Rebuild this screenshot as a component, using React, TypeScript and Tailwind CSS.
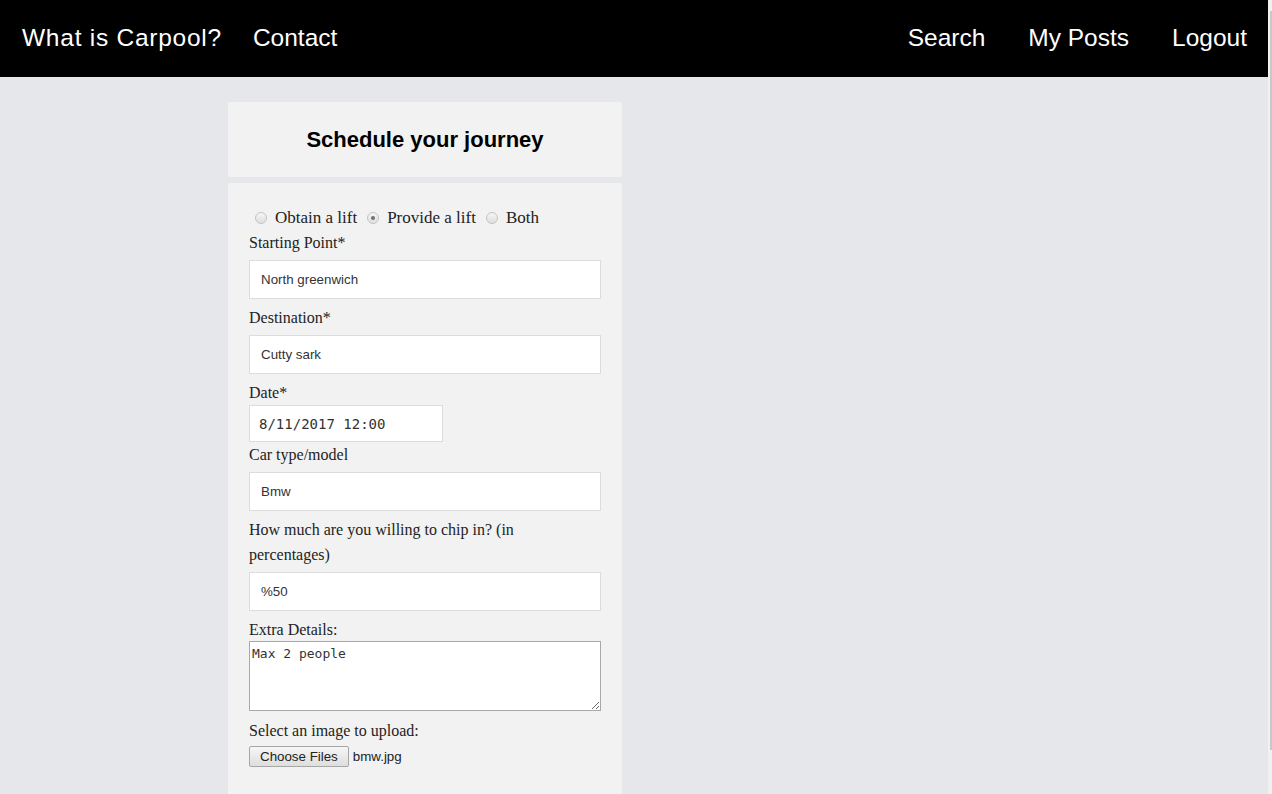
import { useState } from "react"

function Radio({ checked, label, onClick }: { checked: boolean; label: string; onClick: () => void }) {
  return (
    <label className="flex items-center cursor-pointer" onClick={onClick}>
      <span className="w-[12px] h-[12px] rounded-full border border-[#c4c4c4] bg-gradient-to-b from-[#f6f6f6] to-[#dedede] flex items-center justify-center mr-[8px]">
        {checked && <span className="w-[4px] h-[4px] rounded-full bg-[#707070]" />}
      </span>
      <span>{label}</span>
    </label>
  )
}

function Field({ label, value }: { label: React.ReactNode; value: string }) {
  return (
    <>
      <div>{label}</div>
      <input
        type="text"
        defaultValue={value}
        className="block w-[352px] h-[39px] mt-[5px] mb-[6px] px-[11px] bg-white border border-[#dcdcdc] text-[13.33px] text-[#333] font-['Liberation_Sans',Arial,sans-serif] outline-none"
      />
    </>
  )
}

export default function App() {
  const [mode, setMode] = useState("provide")

  return (
    <div className="min-h-[794px] flex bg-[#e6e7eb]">
      <div className="flex-1 flex flex-col">
        {/* Nav */}
        <nav className="h-[77px] bg-black flex items-center justify-between text-white text-[24.5px] font-['Liberation_Sans',Arial,sans-serif]">
          <div className="flex pl-[22px]">
            <a href="#" className="leading-none tracking-[0.75px]">What is Carpool?</a>
            <a href="#" className="leading-none ml-[31px]">Contact</a>
          </div>
          <div className="flex gap-[43px] pr-[21px]">
            <a href="#" className="leading-none">Search</a>
            <a href="#" className="leading-none">My Posts</a>
            <a href="#" className="leading-none">Logout</a>
          </div>
        </nav>

        {/* Form column */}
        <div className="flex-1 pl-[228px] pt-[25px] flex flex-col gap-[6px] w-[622px]">
          <div className="h-[75px] bg-[#f2f2f2] rounded-[2px] flex items-center justify-center">
            <h2 className="text-[22px] font-bold text-black font-['Liberation_Sans',Arial,sans-serif]">Schedule your journey</h2>
          </div>

          <div className="flex-1 bg-[#f2f2f2] rounded-t-[2px] pt-[22px] pb-[20px] pl-[21px] text-[16px] leading-[25px] text-[#222] font-['Liberation_Serif','Times_New_Roman',serif]">
            <div className="flex items-center gap-[10px] pl-[6px] text-[17px]">
              <Radio checked={mode === "obtain"} label="Obtain a lift" onClick={() => setMode("obtain")} />
              <Radio checked={mode === "provide"} label="Provide a lift" onClick={() => setMode("provide")} />
              <Radio checked={mode === "both"} label="Both" onClick={() => setMode("both")} />
            </div>

            <Field label="Starting Point*" value="North greenwich" />
            <Field label="Destination*" value="Cutty sark" />

            <div>Date*</div>
            <input
              type="text"
              defaultValue="8/11/2017 12:00"
              className="block w-[194px] h-[37px] px-[9px] bg-white border border-[#dcdcdc] text-[14px] text-[#333] font-['DejaVu_Sans_Mono','Liberation_Mono',monospace] outline-none"
            />

            <Field label="Car type/model" value="Bmw" />
            <Field
              label={
                <>
                  How much are you willing to chip in? (in
                  <br />
                  percentages)
                </>
              }
              value="%50"
            />

            <div>Extra Details:</div>
            <textarea
              defaultValue="Max 2 people"
              className="block w-[352px] h-[70px] -mt-[1px] mb-[7px] px-[2px] py-[4px] bg-white border border-[#a9a9a9] text-[13px] leading-[16px] text-[#333] font-['DejaVu_Sans_Mono','Liberation_Mono',monospace] outline-none"
            />

            <div>Select an image to upload:</div>
            <div className="flex items-center mt-[1px] font-['Liberation_Sans',Arial,sans-serif] text-[13.33px] text-[#222]">
              <button className="h-[21px] px-[10px] border border-[#a6a6a6] rounded-[2px] bg-gradient-to-b from-[#f6f6f6] to-[#dedede] leading-none text-[#222]">
                Choose Files
              </button>
              <span className="ml-[4px]">bmw.jpg</span>
            </div>
          </div>
        </div>
      </div>

      {/* scrollbar strip */}
      <div className="w-[4px] bg-[#f1f1f1] pt-[11px] pb-[44px] flex justify-end">
        <div className="w-[2px] h-full bg-[#c8c8c8]" />
      </div>
    </div>
  )
}
